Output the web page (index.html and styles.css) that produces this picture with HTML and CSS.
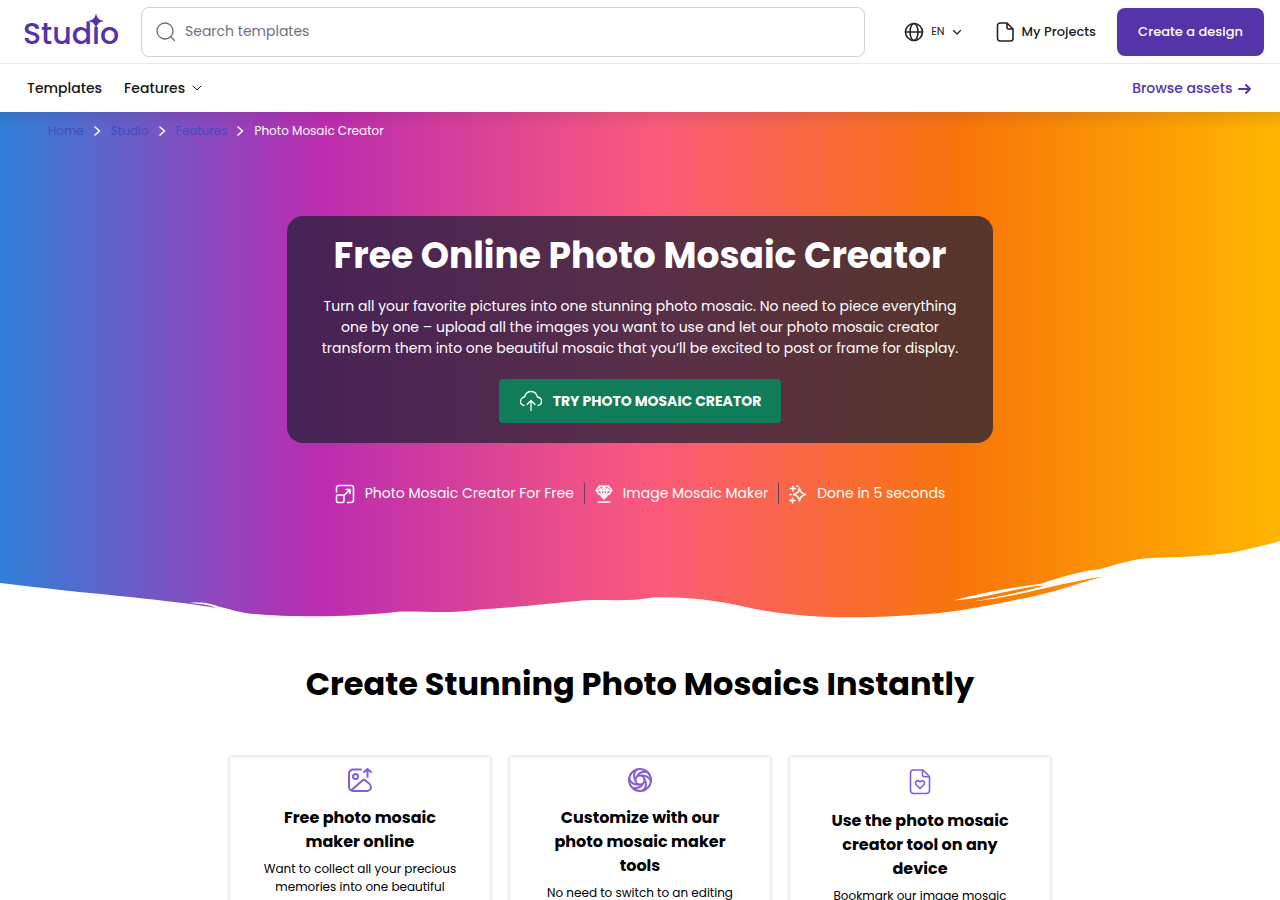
FILE: index.html
```html
<!DOCTYPE html>
<html lang="en">
<head>
    <meta charset="UTF-8">
    <meta name="viewport" content="width=device-width, initial-scale=1.0">
    <title>Free Online Photo Mosaic Creator</title>
    <link rel="stylesheet" href="styles.css">
</head>
<body>

    <header class="header">
        <div class="topbar">
            <a href="#" class="logo">Stud<span class="logo-i">i<svg class="logo-star" viewBox="0 0 16 16"><path d="M8 0C8.8 4.8 11 7.2 16 8C11 8.8 8.8 11.2 8 16C7.2 11.2 5 8.8 0 8C5 7.2 7.2 4.8 8 0Z"/></svg></span>o</a>
            <form class="search">
                <svg class="icon" width="22" height="22" viewBox="0 0 22 22"><circle cx="10" cy="10" r="8"/><path d="M16 16l3.500 3.500"/></svg>
                <input type="text" class="search-input" placeholder="Search templates" aria-label="Search templates">
            </form>
            <button class="lang">
                <svg class="icon bold" width="20" height="20" viewBox="0 0 20 20"><circle cx="10" cy="10" r="8.500"/><ellipse cx="10" cy="10" rx="4" ry="8.500"/><path d="M1.500 10h17"/></svg>
                <span>EN</span>
                <svg class="icon" width="10" height="10" viewBox="0 0 10 10"><path d="M1.500 3.500L5 7l3.500-3.500"/></svg>
            </button>
            <a href="#" class="projects">
                <svg class="icon bold" width="18" height="20" viewBox="0 0 18 20"><path d="M4 1h7l6 6v9.500a2.500 2.500 0 0 1-2.500 2.500h-10A2.500 2.500 0 0 1 1.500 16.500V3.500A2.500 2.500 0 0 1 4 1zM11 1v4.500A1.500 1.500 0 0 0 12.500 7H17"/></svg>
                My Projects
            </a>
            <button class="create">Create a design</button>
        </div>
        <nav class="subnav">
            <a href="#" class="nav-link">Templates</a>
            <a href="#" class="nav-link">Features <svg class="icon" width="10" height="10" viewBox="0 0 10 10"><path d="M1 3l4 4 4-4"/></svg></a>
            <a href="#" class="browse">Browse assets <svg class="icon heavy" width="14" height="12" viewBox="0 0 14 12"><path d="M1 6h11M8 2l4 4-4 4"/></svg></a>
        </nav>
    </header>

    <main>
        <section class="hero">
            <nav class="breadcrumb" aria-label="Breadcrumb">
                <a href="#">Home</a>
                <svg class="icon bold" width="7" height="10" viewBox="0 0 7 10"><path d="M1 1l4.500 4L1 9"/></svg>
                <a href="#">Studio</a>
                <svg class="icon bold" width="7" height="10" viewBox="0 0 7 10"><path d="M1 1l4.500 4L1 9"/></svg>
                <a href="#">Features</a>
                <svg class="icon bold" width="7" height="10" viewBox="0 0 7 10"><path d="M1 1l4.500 4L1 9"/></svg>
                <span>Photo Mosaic Creator</span>
            </nav>

            <div class="panel">
                <h1>Free Online Photo Mosaic Creator</h1>
                <p>Turn all your favorite pictures into one stunning photo mosaic. No need to piece everything one by one – upload all the images you want to use and let our photo mosaic creator transform them into one beautiful mosaic that you’ll be excited to post or frame for display.</p>
                <a href="#" class="try">
                    <svg class="icon" width="24" height="22" viewBox="0 0 24 22"><path d="M5 15.500C2.800 15 1.500 13.500 1.500 11.500C1.500 9 3.500 7.200 5.500 7C6.500 3.500 9 1.500 12 1.500C15.500 1.500 17.800 4 18.300 7C21 7.300 22.500 9.300 22.500 11.500C22.500 13.500 21 15.200 19 15.500M12 20.500V10.500M8 14.500l4-4 4 4"/></svg>
                    TRY PHOTO MOSAIC CREATOR
                </a>
            </div>

            <ul class="points">
                <li>
                    <svg class="icon bold" width="20" height="20" viewBox="0 0 20 20"><path d="M1.500 8V4A2.500 2.500 0 0 1 4 1.500h12A2.500 2.500 0 0 1 18.500 4v12a2.500 2.500 0 0 1-2.500 2.500h-3.500M11 5.500h4V9.500M15 5.500L9.500 11"/><rect x="1.500" y="11" width="7.500" height="7.500" rx="1.500"/></svg>
                    Photo Mosaic Creator For Free
                </li>
                <li>
                    <svg class="icon" width="18" height="20" viewBox="0 0 18 20"><path d="M4.500 2h9L17 6.500 9 15 1 6.500zM1.500 6.500h15M5.500 6.500L9 14.500l3.500-8M4.500 2.500l1 4L9 2.500l3.500 4 1-4M3 10h12M9 2v12M3 18h12"/></svg>
                    Image Mosaic Maker
                </li>
                <li>
                    <svg class="icon bold" width="18" height="20" viewBox="0 0 18 20"><path d="M10.500 4C11 8 12.500 9.500 16.500 10.500C12.500 11.500 11 13 10.500 17C10 13 8.500 11.500 4.500 10.500C8.500 9.500 10 8 10.500 4zM4 2v5M1.500 4.500h5M3.500 14v5M1 16.500h5M1 10.500h1M8 2.200h1"/></svg>
                    Done in 5 seconds
                </li>
            </ul>

            <svg class="wave" viewBox="0 0 1280 80" preserveAspectRatio="none" aria-hidden="true">
                <path d="M0 45C40 50 90 55 130 59C165 63 195 66 216 70C208 66 200 66 189 65C205 63.500 211 66 217 68C232 72 243 75 253 76C290 79 345 80 400 73.500C425 73 450 76 480 71.500C520 69 555 65 582 62.500C602 61 630 64 653 59.500C690 58 725 64 755 71C795 79 835 80 875 79C900 78 910 77 928 76C965 73 1000 65 1035 58C1065 51 1085 43 1104 38.500C1062 44 1020 59 968 64C995 60 1035 51 1044 47.500C1018 49 985 61 953 62.500C978 56 1005 50 1040 46C1058 40 1080 33 1098 31.500C1118 26 1136 20 1152 20C1180 19 1215 18 1240 13C1258 9 1270 6 1280 3V81H0z"/>
            </svg>
        </section>

        <section class="features">
            <h2>Create Stunning Photo Mosaics Instantly</h2>
            <div class="cards">
                <article class="card">
                    <svg class="icon heavy" width="26" height="26" viewBox="0 0 26 26"><path d="M14 2.500H6A4 4 0 0 0 2 6.500V20a4 4 0 0 0 4 4h14a4 4 0 0 0 4-4c0-2-1-3-2.500-4L18 13.200a2 2 0 0 0-2.500.2L4.500 23M20.500 10V2M17 5l3.500-3L24 5"/><circle cx="8.500" cy="9.500" r="2.500"/></svg>
                    <h3>Free photo mosaic maker online</h3>
                    <p>Want to collect all your precious memories into one beautiful</p>
                </article>
                <article class="card">
                    <svg class="icon heavy" width="26" height="26" viewBox="0 0 26 26"><circle cx="13" cy="13" r="11"/><circle cx="13" cy="13" r="4.500"/><path d="M10 9.500Q13 4 20 5M14.500 8.500Q21 8 24 14M17.500 12.500Q21 18 16.500 23.500M16 16.500Q13 22 6 21M11.500 17.500Q5 18 2 12M8.500 13.500Q5 8 9.500 2.500"/></svg>
                    <h3>Customize with our photo mosaic maker tools</h3>
                    <p>No need to switch to an editing</p>
                </article>
                <article class="card">
                    <svg class="icon bold tall" width="26" height="28" viewBox="0 0 26 28"><path d="M6.500 3h9.500l6.500 6.500V23.500a3 3 0 0 1-3 3H6.500A3 3 0 0 1 3.500 23.500V6A3 3 0 0 1 6.500 3zM15.500 3v5A1.800 1.800 0 0 0 17.300 9.800H22.500M13 21.500l-3.800-3.800C7 15 10.500 12 13 15C15.500 12 19 15 16.800 17.700z"/></svg>
                    <h3>Use the photo mosaic creator tool on any device</h3>
                    <p>Bookmark our image mosaic</p>
                </article>
            </div>
        </section>
    </main>

</body>
</html>
```
FILE: styles.css
```css
* {
    padding: 0;
    margin: 0;
    box-sizing: border-box;
}

body {
    font-family: Poppins, Inter, sans-serif;
    font-size: 14px;
    color: #000;
    background-color: #fff;
    overflow-x: hidden;
}

a {
    text-decoration: none;
}

button {
    font-family: inherit;
    border: none;
    cursor: pointer;
}

.icon {
    flex-shrink: 0;
    fill: none;
    stroke: currentColor;
    stroke-width: 1.3;
    stroke-linecap: round;
    stroke-linejoin: round;
}

.bold {
    stroke-width: 1.6;
}

.heavy {
    stroke-width: 2;
}

/* header */
.topbar {
    display: flex;
    align-items: center;
    height: 64px;
    padding: 0 16px 0 23px;
    border-bottom: 1px solid #e8e8ec;
}

.logo {
    width: 94px;
    margin-right: 24px;
    padding-top: 4px;
    font-size: 30px;
    line-height: 40px;
    font-weight: 500;
    color: #5533a8;
}

.logo-i {
    position: relative;
}

.logo-star {
    position: absolute;
    left: -4px;
    top: 1px;
    width: 16px;
    height: 16px;
    fill: #5533a8;
}

.search {
    flex: 1;
    display: flex;
    align-items: center;
    gap: 8px;
    height: 50px;
    padding: 0 13px;
    margin-right: 39px;
    border: 1px solid #d0d0d6;
    border-radius: 8px;
    color: #6b6b76;
}

.search-input {
    flex: 1;
    border: none;
    outline: none;
    font-family: inherit;
    font-size: 14px;
}

.search-input::placeholder {
    color: #70707c;
}

.lang {
    display: flex;
    align-items: center;
    gap: 7px;
    margin-right: 34px;
    background: none;
    font-size: 11px;
    color: #222;
}

.projects {
    display: flex;
    align-items: center;
    gap: 8px;
    margin-right: 21px;
    font-size: 13px;
    font-weight: 500;
    color: #222;
}

.create {
    height: 48px;
    width: 147px;
    border-radius: 8px;
    background-color: #5533a8;
    color: #fff;
    font-size: 13px;
    font-weight: 500;
}

.subnav {
    display: flex;
    align-items: center;
    height: 48px;
    padding: 0 28px 0 27px;
    gap: 22px;
    font-weight: 500;
}

.nav-link {
    color: #161616;
}

.nav-link .icon {
    margin-left: 3px;
    stroke-width: 1;
}

.browse {
    margin-left: auto;
    color: #5533a8;
}

.browse .icon {
    margin-left: 2px;
    vertical-align: -2px;
}

/* hero */
.hero {
    display: flex;
    flex-direction: column;
    align-items: center;
    background: linear-gradient(rgba(60, 40, 80, 0.12), transparent 16px),
        linear-gradient(90deg, #3080d8, #bb2bb0 25%, #fb5a7b 51%, #f8750a 75%, #ffb600);
    color: #fff;
}

.breadcrumb {
    align-self: stretch;
    display: flex;
    align-items: center;
    gap: 10px;
    padding: 10px 48px;
    font-size: 12px;
    line-height: 18px;
}

.breadcrumb a {
    color: #3f4cc0;
}

.panel {
    width: 90%;
    max-width: 706px;
    margin-top: 66px;
    padding: 13px 32px 20px;
    border-radius: 16px;
    background-color: rgba(33, 32, 55, 0.75);
    text-align: center;
}

.panel h1 {
    font-size: 36px;
    line-height: 54px;
    margin-bottom: 13px;
}

.panel p {
    line-height: 21px;
    margin-bottom: 20px;
}

.try {
    display: inline-flex;
    align-items: center;
    gap: 10px;
    height: 44px;
    padding: 0 20px;
    border-radius: 4px;
    background-color: #107c5a;
    color: #fff;
    font-weight: 700;
}

.points {
    display: flex;
    margin-top: 40px;
    list-style: none;
}

.points li {
    display: flex;
    align-items: center;
    gap: 10px;
    line-height: 21px;
    padding: 0 10px;
}

.points li + li {
    border-left: 1px solid #6b4060;
}

.wave {
    display: block;
    width: 100%;
    height: 80px;
    margin-top: 34px;
    fill: #fff;
}

/* feature cards */
.features {
    padding: 42px 20px;
    text-align: center;
}

.features h2 {
    font-size: 32px;
    line-height: 48px;
    margin-bottom: 49px;
}

.cards {
    display: grid;
    grid-template-columns: repeat(3, 1fr);
    gap: 20px;
    max-width: 820px;
    margin: 0 auto;
}

.card {
    padding: 10px 32px 24px;
    box-shadow: 0 0 4px rgba(0, 0, 0, 0.22);
}

.card .icon {
    display: block;
    margin: 0 auto 13px;
    color: #855cd8;
}

.card .tall {
    margin-bottom: 14px;
}

.card h3 {
    font-size: 16px;
    line-height: 24px;
    margin-bottom: 6px;
}

.card p {
    font-size: 12px;
    line-height: 18px;
}
```
